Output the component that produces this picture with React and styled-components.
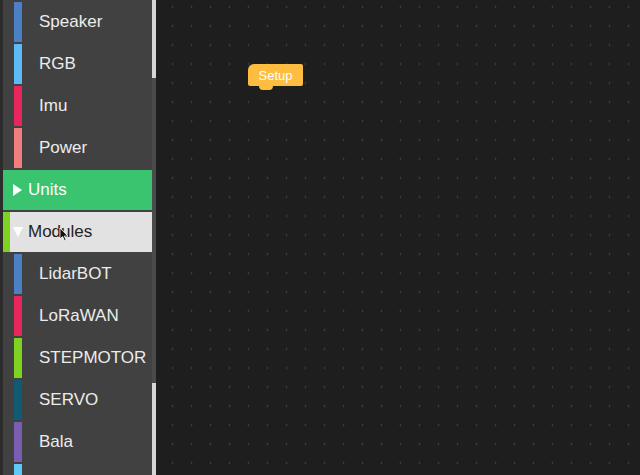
import styled, { createGlobalStyle } from 'styled-components'

const GlobalStyle = createGlobalStyle`
    html, body {
        margin: 0;
        padding: 0;
        background: #1e1e1e;
        font-family: "Liberation Sans", Arial, sans-serif;
    }
`

const items = [
    { kind: 'block', label: 'Speaker', color: '#4c80c4' },
    { kind: 'block', label: 'RGB', color: '#5cbaf6' },
    { kind: 'block', label: 'Imu', color: '#e8265e' },
    { kind: 'block', label: 'Power', color: '#f07e7e' },
    { kind: 'category', label: 'Units', open: false },
    { kind: 'category', label: 'Modules', open: true, accent: '#7ed321' },
    { kind: 'block', label: 'LidarBOT', color: '#4c80c4' },
    { kind: 'block', label: 'LoRaWAN', color: '#e8265e' },
    { kind: 'block', label: 'STEPMOTOR', color: '#7ed321' },
    { kind: 'block', label: 'SERVO', color: '#0f5b74' },
    { kind: 'block', label: 'Bala', color: '#7b5db2' },
    { kind: 'block', label: '', color: '#5ec8f6' },
]

export default function App() {
    return (
        <>
            <GlobalStyle />
            <Page>
                <Toolbox>
                    <List>
                        {items.map((item, i) => item.kind === 'block'
                            ? <BlockRow key={i}>
                                <ColorBar color={item.color} />
                                <Label>{item.label}</Label>
                              </BlockRow>
                            : <CategoryRow key={i} open={item.open}>
                                {item.accent ? <Accent color={item.accent} /> : null}
                                <Triangle open={item.open} accent={!!item.accent} />
                                <CategoryLabel open={item.open}>{item.label}</CategoryLabel>
                                {item.open ? <Cursor /> : null}
                              </CategoryRow>
                        )}
                    </List>
                    <ScrollTrack>
                        <Thumb size={78} />
                        <Thumb size={92} />
                    </ScrollTrack>
                </Toolbox>
                <Workspace>
                    <SetupBlock>Setup</SetupBlock>
                </Workspace>
            </Page>
        </>
    )
}

function Cursor() {
    return (
        <CursorIcon width="10" height="15" viewBox="0 0 10 15">
            <path d="M1 1 L1 12 L3.6 9.6 L5.6 14 L7.2 13.3 L5.3 9 L8.8 9 Z" fill="#111" stroke="#fff" strokeWidth="0.8" strokeLinejoin="round" />
        </CursorIcon>
    )
}

const Page = styled.div`
    display: flex;
    width: 640px;
    height: 475px;
    overflow: hidden;
`
const Toolbox = styled.div`
    display: flex;
    width: 153px;
    height: 475px;
    background: #414141;
    border-left: 3px solid #2c2c2c;
    flex-shrink: 0;
`
const List = styled.ul`
    display: flex;
    flex-direction: column;
    gap: 2px;
    width: 149px;
    margin: 0;
    padding: 2px 0 0 0;
    list-style: none;
    overflow: hidden;
`
const BlockRow = styled.li`
    display: flex;
    align-items: center;
    height: 40px;
    flex-shrink: 0;
    padding-left: 11px;
`
const ColorBar = styled.span`
    width: 8px;
    height: 40px;
    background: ${props => props.color};
    flex-shrink: 0;
`
const Label = styled.span`
    margin-left: 17px;
    padding-bottom: 1px;
    font-size: 17px;
    color: #ececec;
    white-space: nowrap;
`
const CategoryRow = styled.li`
    position: relative;
    display: flex;
    align-items: center;
    height: 40px;
    flex-shrink: 0;
    background: ${props => props.open ? '#e2e2e2' : '#3bc46f'};
`
const Accent = styled.span`
    width: 7px;
    height: 40px;
    background: ${props => props.color};
`
const Triangle = styled.span`
    width: 0;
    height: 0;
    margin-left: ${props => props.accent ? '3px' : '10px'};
    ${props => props.open
        ? 'border-left: 5px solid transparent; border-right: 5px solid transparent; border-top: 10px solid #ffffff;'
        : 'border-top: 6px solid transparent; border-bottom: 6px solid transparent; border-left: 9px solid #ffffff;'}
`
const CategoryLabel = styled.span`
    margin-left: ${props => props.open ? '5px' : '6px'};
    padding-bottom: 1px;
    font-size: 17px;
    color: ${props => props.open ? '#222222' : '#ffffff'};
`
const CursorIcon = styled.svg`
    position: absolute;
    left: 56px;
    top: 15px;
`
const ScrollTrack = styled.div`
    display: flex;
    flex-direction: column;
    justify-content: space-between;
    width: 4px;
    background: #4a4a4a;
`
const Thumb = styled.div`
    height: ${props => props.size}px;
    background: #d6d6d6;
`
const Workspace = styled.div`
    position: relative;
    flex: 1;
    height: 475px;
    background-color: #1e1e1e;
    background-image: radial-gradient(circle, #474747 0.8px, transparent 1.1px);
    background-size: 19px 19px;
    background-position: 7px -2.5px;
`
const SetupBlock = styled.div`
    position: absolute;
    left: 92px;
    top: 64px;
    width: 55px;
    height: 22px;
    display: flex;
    align-items: center;
    justify-content: center;
    background: #fdbd41;
    border-radius: 6px 2px 2px 2px;
    color: #ffffff;
    font-size: 13px;

    &::after {
        content: '';
        position: absolute;
        left: 11px;
        bottom: -4px;
        width: 14px;
        height: 4px;
        background: #fdbd41;
        border-radius: 0 0 7px 7px;
    }
`
